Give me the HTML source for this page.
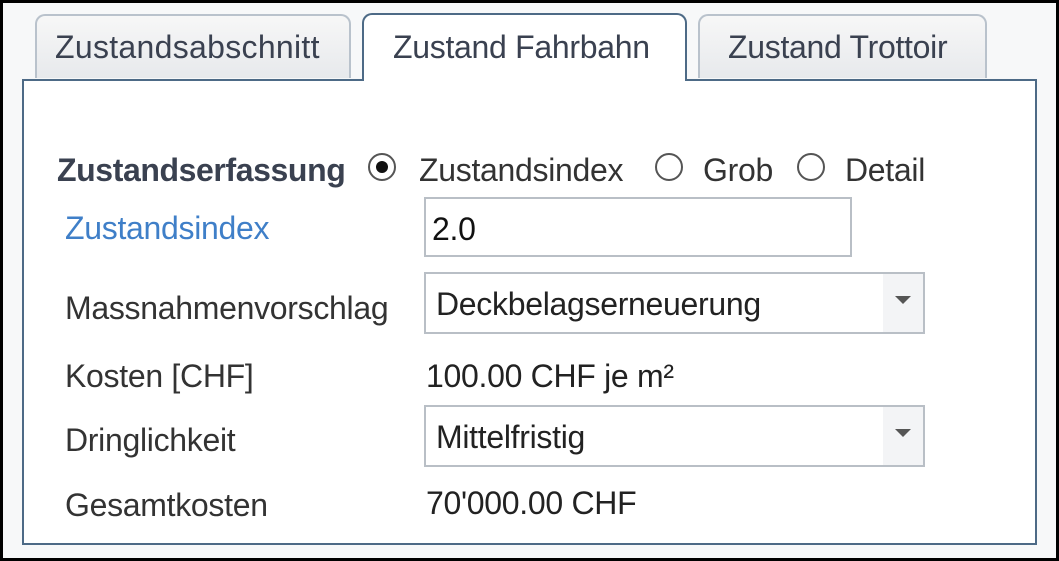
<!DOCTYPE html>
<html><head><style>
html,body{margin:0;padding:0}
body{width:1059px;height:561px;background:#000;position:relative;overflow:hidden;font-family:"Liberation Sans",sans-serif;color:#333}
.in{position:absolute;left:3px;top:3px;width:1053px;height:555px;background:#f7f8f9}
.tab{position:absolute;top:14px;height:64px;border:2px solid #b9c2cc;border-bottom:none;border-radius:10px 10px 0 0;background:linear-gradient(#f7f7f7,#e7e9ec);box-sizing:border-box}
.panel{position:absolute;left:22px;top:79px;width:1015px;height:466px;border:2px solid #4d6a86;box-sizing:border-box;background:#fff}
.act{background:#fff;border:2px solid #4d6a86;border-bottom:none;height:68px;top:13px;z-index:2}
.t{position:absolute;font-size:32px;color:#333;white-space:nowrap;letter-spacing:-0.3px;z-index:3}
.box{position:absolute;border:2px solid #b9bfc6;background:#fff;box-sizing:border-box}
.arr{position:absolute;right:0;top:0;bottom:0;width:40px;background:#f3f4f6}
.arr:after{content:"";position:absolute;left:12px;top:22px;border-left:8px solid transparent;border-right:8px solid transparent;border-top:8px solid #555}
.rad{position:absolute;width:28px;height:28px;border:2px solid #555;border-radius:50%;box-sizing:border-box;background:#fff}
</style></head><body><div class="in"></div>
<div class="panel"></div>
<div class="tab" style="left:35px;width:316px"></div>
<div class="tab act" style="left:362px;width:325px"></div>
<div class="tab" style="left:698px;width:289px"></div>
<div class="t" style="left:55px;top:29px;color:#3a4150;letter-spacing:0.3px">Zustandsabschnitt</div>
<div class="t" style="left:393px;top:29px;color:#3a4150">Zustand Fahrbahn</div>
<div class="t" style="left:728px;top:29px;color:#3a4150">Zustand Trottoir</div>
<div class="t" style="left:57px;top:152px;font-weight:bold;color:#3a4150;letter-spacing:-0.4px">Zustandserfassung</div>
<div class="rad" style="left:368px;top:153px"><div style="position:absolute;left:6px;top:6px;width:12px;height:12px;border-radius:50%;background:#111"></div></div>
<div class="t" style="left:419px;top:152px">Zustandsindex</div>
<div class="rad" style="left:655px;top:153px"></div>
<div class="t" style="left:703px;top:152px">Grob</div>
<div class="rad" style="left:797px;top:153px"></div>
<div class="t" style="left:845px;top:152px">Detail</div>
<div class="t" style="left:65px;top:210px;color:#3f7fc8">Zustandsindex</div>
<div class="box" style="left:424px;top:197px;width:428px;height:60px"><div class="t" style="left:6px;top:12px;color:#111">2.0</div></div>
<div class="t" style="left:65px;top:290px">Massnahmenvorschlag</div>
<div class="box" style="left:424px;top:272px;width:501px;height:62px"><div class="t" style="left:10px;top:12px;color:#222">Deckbelagserneuerung</div><div class="arr"></div></div>
<div class="t" style="left:65px;top:358px">Kosten [CHF]</div>
<div class="t" style="left:426px;top:358px;color:#222">100.00 CHF je m²</div>
<div class="t" style="left:65px;top:422px">Dringlichkeit</div>
<div class="box" style="left:424px;top:405px;width:501px;height:62px"><div class="t" style="left:10px;top:12px;color:#222">Mittelfristig</div><div class="arr"></div></div>
<div class="t" style="left:65px;top:487px">Gesamtkosten</div>
<div class="t" style="left:426px;top:485px;color:#222">70'000.00 CHF</div>
</body></html>
